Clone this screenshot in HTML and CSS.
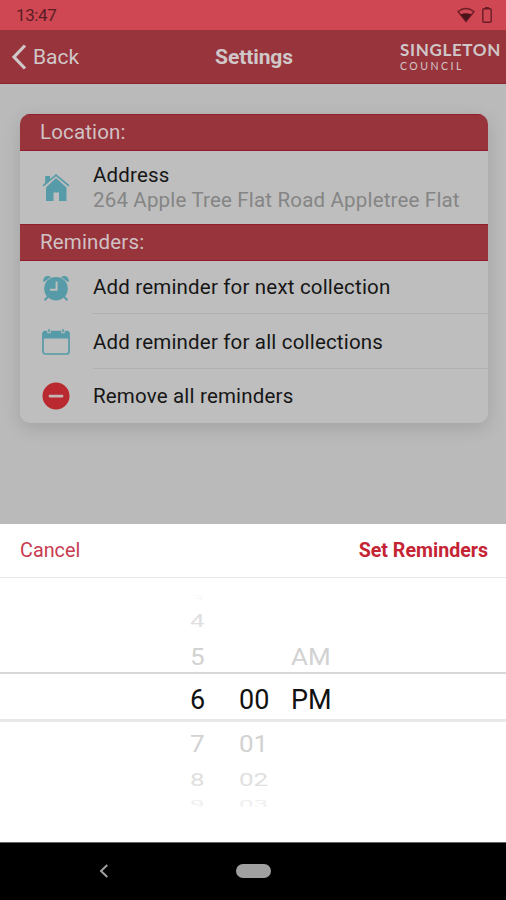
FILE: index.html
```html
<!DOCTYPE html>
<html lang="en">
<head>
<meta charset="utf-8">
<title>Settings</title>
<link rel="stylesheet" href="styles.css">
</head>
<body>
<div class="screen">
  <div class="status">
    <span class="time">13:47</span>
    <svg class="wifi" width="18" height="16" viewBox="0 0 18 16"><path d="M1 4.5Q9-1.5 17 4.5L9 14.5Z" fill="none" stroke="#6b1d27" stroke-width="1.3" stroke-linejoin="round"/><path d="M3.5 7.5Q9 5 14.5 7.5L9 14Z" fill="#4c141b"/></svg>
    <svg class="battery" width="10" height="16" viewBox="0 0 10 16"><path d="M3 0h4v2H3z" fill="#6b1d27"/><rect x=".8" y="1.8" width="8.4" height="13.4" rx="1.2" fill="none" stroke="#6b1d27" stroke-width="1.4"/></svg>
  </div>
  <header class="header">
    <div class="back">
      <svg width="15" height="26" viewBox="0 0 15 26"><path d="M13 1.5 2 13 13 24.5" fill="none" stroke="#d0c7c8" stroke-width="3.2"/></svg>
      <span>Back</span>
    </div>
    <h1>Settings</h1>
    <div class="logo"><b>SINGLETON</b><span>COUNCIL</span></div>
  </header>
  <main class="content">
    <section class="card">
      <h2>Location:</h2>
      <div class="row address">
        <svg class="icon" width="28" height="28" viewBox="0 0 28 28" fill="#569ba7"><path d="M14 4 24.5 13.5V27H17V18.5H11.5V27H4V13.5Z"/><path d="M3.2 2H8v4L3.2 10Z"/><path d="M1.2 13.2 14 2.6 26.8 13.2" fill="none" stroke="#bebebe" stroke-width="1.4"/><path d="M1 11.9 14 1.2 27 11.9" fill="none" stroke="#569ba7" stroke-width="1.7"/></svg>
        <div class="label"><div>Address</div><div class="sub">264 Apple Tree Flat Road Appletree Flat</div></div>
      </div>
      <h2>Reminders:</h2>
      <div class="row first">
        <svg class="icon" width="28" height="28" viewBox="0 0 28 28" fill="#569ba7"><path d="M1.6 8.2C-.3 3.5 5.7-.2 8.8 3.3Z"/><path d="M26.4 8.2C28.3 3.5 22.3-.2 19.2 3.3Z"/><path d="m6.2 22.5-3.6 3.7M21.8 22.5l3.6 3.7" stroke="#569ba7" stroke-width="2"/><circle cx="14" cy="14.7" r="11.8"/><path d="M14.6 7.5v8.2H8" fill="none" stroke="#bebebe" stroke-width="2"/></svg>
        <div class="label line">Add reminder for next collection</div>
      </div>
      <div class="row middle">
        <svg class="icon" width="28" height="28" viewBox="0 0 28 28" fill="#569ba7"><rect x="1" y="3.5" width="26" height="22.5" rx="2.5" fill="none" stroke="#569ba7" stroke-width="1.7"/><path d="M.5 10.5V5.5Q.5 3 3 3H25Q27.5 3 27.5 5.5V10.5Z"/><path d="M7 1v4.2M21 1v4.2" stroke="#bebebe" stroke-width="3.5"/><path d="M7 1v3.2M21 1v3.2" stroke="#569ba7" stroke-width="1.5"/></svg>
        <div class="label line">Add reminder for all collections</div>
      </div>
      <div class="row">
        <svg class="icon" width="28" height="28" viewBox="0 0 28 28"><circle cx="14" cy="14" r="13.5" fill="#b9292f"/><rect x="6.7" y="12.7" width="14.6" height="2.9" rx="1" fill="#c6b6b6"/></svg>
        <div class="label">Remove all reminders</div>
      </div>
    </section>
  </main>
  <section class="sheet">
    <div class="toolbar"><span class="cancel">Cancel</span><span class="confirm">Set Reminders</span></div>
    <div class="wheel">
      <div class="band"></div>
      <div class="col hours">
        <span class="far edge">3</span><span class="mid">4</span><span class="near">5</span><span class="sel">6</span><span class="near">7</span><span class="mid">8</span><span class="far">9</span>
      </div>
      <div class="col minutes">
        <span></span><span></span><span></span><span class="sel">00</span><span class="near">01</span><span class="mid">02</span><span class="far">03</span>
      </div>
      <div class="col period">
        <span></span><span></span><span class="near">AM</span><span class="sel">PM</span>
      </div>
    </div>
  </section>
  <nav class="nav">
    <svg width="10" height="14" viewBox="0 0 10 14"><path d="M8.3 1 2 7l6.3 6" fill="none" stroke="#a0a0a0" stroke-width="2"/></svg>
    <div class="pill"></div>
  </nav>
</div>
</body>
</html>
```
FILE: styles.css
```css
* { box-sizing: border-box; }
body { margin: 0; font-family: Roboto, "Liberation Sans", sans-serif; }
.screen { width: 506px; height: 900px; display: flex; flex-direction: column; background: #bababa; overflow: hidden; }
.status { height: 30px; background: #cf4753; display: flex; align-items: center; padding: 0 14px 0 16px; color: #5c1c24; }
.time { font-size: 17px; letter-spacing: -.4px; flex: 1; }
.wifi { margin-right: 7px; }
.header { height: 54px; background: #98343c; border-bottom: 1px solid #8b2732; display: grid; grid-template-columns: 1fr auto 1fr; align-items: center; color: #d0c7c8; }
.back { display: flex; align-items: center; gap: 6px; padding-left: 12px; font-size: 21px; padding-top: 1px; }
h1 { margin: 0; padding: 1px 0 0 2px; font-size: 21px; font-weight: 700; letter-spacing: -.1px; }
.logo { justify-self: end; width: 106px; display: flex; flex-direction: column; font-family: Lato, sans-serif; }
.logo b { font-size: 17px; line-height: 18px; letter-spacing: .65px; }
.logo span { font-size: 10.5px; line-height: 14px; letter-spacing: 2.5px; }
.content { height: 440px; padding: 30px 18px 0 20px; }
.card { height: 309px; border-radius: 10px; overflow: hidden; background: #bebebe; box-shadow: 0 5px 18px rgba(0,0,0,.13); }
h2 { margin: 0; height: 37px; padding-left: 20px; line-height: 34px; font-size: 20.5px; font-weight: 400; letter-spacing: .16px; background: #98343c; color: #d0c2c4; border-bottom: 1px solid #901e2e; border-top: 1px solid #901e2e; }
.row { height: 54.5px; display: flex; align-items: center; font-size: 20.5px; letter-spacing: .18px; color: #161616; }
.first { height: 53px; }
.middle { height: 55px; }
.middle .label { padding-top: 1px; }
.address { height: 73px; line-height: 25px; }
.icon { margin: 0 23px 0 22px; flex: none; }
.label { flex: 1; height: 100%; display: flex; flex-direction: column; justify-content: center; white-space: nowrap; }
.line { border-bottom: 1px solid #afafaf; }
.sub { color: #858585; }
.sheet { height: 318px; background: #fff; }
.toolbar { height: 54px; display: flex; justify-content: space-between; align-items: center; padding: 0 18px 0 20px; border-bottom: 1px solid #e8e8e8; font-size: 19.8px; color: #c83b50; }
.confirm { font-size: 19.6px; font-weight: 700; color: #c42434; }
.wheel { position: relative; height: 264px; padding-top: 13px; display: flex; padding-left: 190px; overflow: hidden; }
.band { position: absolute; left: 0; right: 0; top: 94px; height: 50px; border-top: 2px solid #d8d8d8; border-bottom: 3px solid #e8e8e8; }
.col { display: grid; grid-template-rows: 16px 28px 44px 42px 46px 26px 22px; align-content: start; font-size: 27px; color: #111; }
.col span { display: flex; align-items: center; }
.hours { width: 49px; }
.minutes { width: 52px; }
.near { color: #d2d2d2; transform: scaleY(.92); }
.near, .mid, .far { font-size: 26px; }
.mid { color: #e0e0e0; transform: scaleY(.7); }
.far { color: #efefef; transform: scaleY(.4); clip-path: inset(-10px 0 5px 0); }
.edge { color: #fafafa; }
.nav { height: 58px; background: #000; border-top: 1px solid #666; display: flex; align-items: center; padding: 0 0 2px 99px; }
.pill { width: 35px; height: 14px; border-radius: 7px; background: #a0a0a0; margin-left: 127px; }
```
